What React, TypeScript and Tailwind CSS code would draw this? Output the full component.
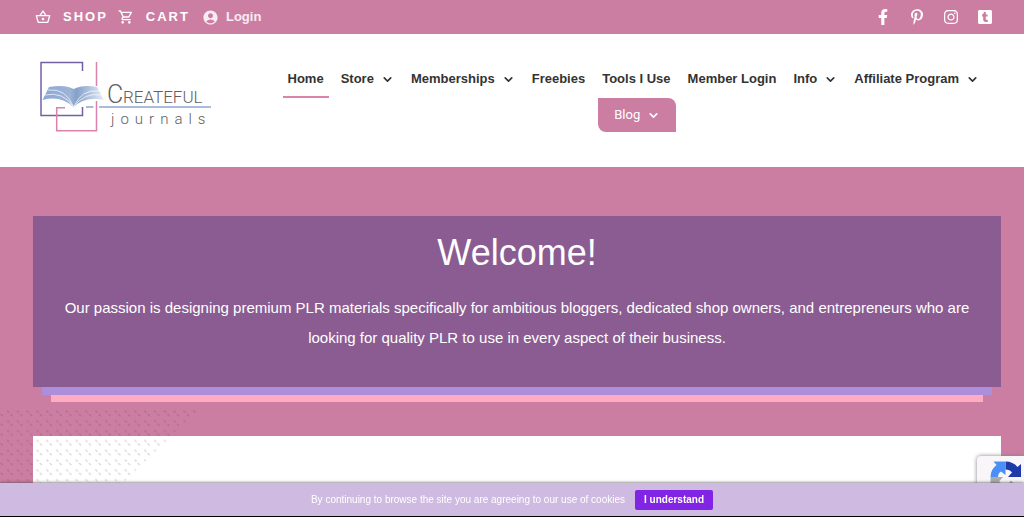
import React from 'react';
import {FaFacebookF, FaPinterestP, FaInstagram, FaTumblrSquare} from "react-icons/fa";
import {MdOutlineShoppingBasket, MdOutlineShoppingCart, MdAccountCircle} from "react-icons/md";
import {ChevronDown} from "lucide-react";

interface INavItem {
	title: string,
	hasMenu?: boolean,
	active?: boolean
}

const navItems: INavItem[] = [
	{title: "Home", active: true},
	{title: "Store", hasMenu: true},
	{title: "Memberships", hasMenu: true},
	{title: "Freebies"},
	{title: "Tools I Use"},
	{title: "Member Login"},
	{title: "Info", hasMenu: true},
	{title: "Affiliate Program", hasMenu: true},
];

const socials = [
	{name: "Facebook", Icon: FaFacebookF},
	{name: "Pinterest", Icon: FaPinterestP},
	{name: "Instagram", Icon: FaInstagram},
	{name: "Tumblr", Icon: FaTumblrSquare},
];

const TopBar = () => (
	<div className="flex h-[34px] items-center justify-between bg-[#cc7ea2] pr-[31px] pl-[35px] text-white">
		<div className="flex items-center text-[13px] font-bold">
			<a href="#shop" className="flex items-center gap-3 tracking-[2px]">
				<MdOutlineShoppingBasket size={16}/>SHOP
			</a>
			<a href="#cart" className="ml-[10px] flex items-center gap-3 tracking-[2px]">
				<MdOutlineShoppingCart size={16}/>CART
			</a>
			<a href="#login" className="ml-3 flex items-center gap-[7px] text-white/85">
				<MdAccountCircle size={17}/>Login
			</a>
		</div>
		<div className="flex items-center gap-[18px]">
			{socials.map(({name, Icon}) => (
				<a key={name} href={`#${name.toLowerCase()}`} aria-label={name}><Icon size={16}/></a>
			))}
		</div>
	</div>
);

const Logo = () => (
	<a href="#home" aria-label="Createful journals" className="block shrink-0">
		<svg width="176" height="76" viewBox="0 0 176 76" fill="none">
			<defs>
				<linearGradient id="page" x1="0" y1="0" x2="1" y2="0">
					<stop offset="0" stopColor="#8ba6d8"/>
					<stop offset="0.45" stopColor="#9fb4d6"/>
					<stop offset="0.55" stopColor="#84a0c8"/>
					<stop offset="1" stopColor="#e4edf6"/>
				</linearGradient>
			</defs>
			<path d="M45.500 11V2.500H4V55.500H45.500V47" stroke="#7560a4" strokeWidth="1.500"/>
			<path d="M59.500 2V26M59.500 41V70.700H19.700V47.700H28" stroke="#da82ab" strokeWidth="1.500"/>
			<path d="M49 47H56.500M62 47H174" stroke="#8fa5d0" strokeWidth="1.500"/>
			<path d="M12 27Q28 24 36.700 29Q46 24 60 27L67 40Q46 36 36.700 47.500Q24 35 5.500 40Z" fill="url(#page)"/>
			<path d="M11 30Q29 28 36.700 47Q44 29 62 31M8 35Q26 31 36.700 47Q47 32 65 35" stroke="#fff" strokeWidth="0.700"/>
			<g fill="#626063" className="font-['Roboto',sans-serif] font-light">
				<text x="70" y="43" fontSize="25">C</text>
				<text x="86" y="43" fontSize="17">REATEFUL</text>
				<text x="74" y="64" fontSize="15" className="tracking-[6px]">journals</text>
			</g>
		</svg>
	</a>
);

const Header = () => (
	<header className="flex h-[133px] justify-between bg-white pr-8 pl-[37px]">
		<div className="pt-[26px]"><Logo/></div>
		<nav className="flex flex-col items-center pt-7">
			<ul className="flex gap-[7px] pr-2 text-[13px] font-bold text-[#333]">
				{navItems.map((item) => (
					<li key={item.title}>
						<a href="#nav"
							 className={`flex h-9 items-center gap-[7px] border-b-2 px-[5px] whitespace-nowrap ${item.active ? "border-[#d884ad]" : "border-transparent"}`}>
							{item.title}
							{item.hasMenu && <ChevronDown size={13} strokeWidth={3}/>}
						</a>
					</li>
				))}
			</ul>
			<a href="#blog"
				 className="flex h-[34px] items-center gap-[7px] rounded-tr-lg rounded-bl-lg bg-[#cc7ea2] px-4 font-['Roboto',sans-serif] text-[13px] text-white">
				Blog
				<ChevronDown size={13} strokeWidth={3}/>
			</a>
		</nav>
	</header>
);

const Welcome = () => (
	<section>
		<div className="bg-[#8a5c92] px-6 pt-[13px] pb-[34px] text-center text-white">
			<h1 className="text-[36px] leading-[48px]">Welcome!</h1>
			<p className="mt-4 text-[15px] leading-[30px]">
				Our passion is designing premium PLR materials specifically for ambitious bloggers, dedicated shop owners, and entrepreneurs who are looking for quality PLR to use in every aspect of their business.
			</p>
		</div>
		<div className="mx-[9px] h-2 bg-[#ad8edb]"/>
		<div className="mx-[18px] h-[7px] bg-[#ffacc2]"/>
	</section>
);

const DotPattern = () => (
	<svg className="absolute top-[410px] left-0" width="200" height="76">
		<defs>
			<pattern id="dots" width="9.800" height="9.800" patternUnits="userSpaceOnUse">
				<path d="M7 0.500h1.300v1h1v1.300h-1.300v-1h-1zM0.600 3.900h1.300v1h1v1.300h-1.300v-1h-1z" fill="#50204c" fillOpacity="0.230"/>
			</pattern>
		</defs>
		<path d="M0 0H198L120 76H0Z" fill="url(#dots)"/>
	</svg>
);

const RecaptchaBadge = () => (
	<div className="fixed right-0 bottom-0 h-[61px] w-[47px] rounded-tl-sm bg-[#f9f6fa] pt-1 pl-3 shadow-[0_0_4px_#808080]">
		<svg width="34" height="34" viewBox="0 0 34 34">
			<path d="M16.500 1.500Q24 1.500 28.500 7L32 4V17H19L23 12.500Q21 9.500 16.500 9.500Z" fill="#1c3aa9"/>
			<path d="M16.500 1.500H4.500L7.500 5Q1.500 9.500 1.500 17H9Q9 13 12 11.500L16.500 15Z" fill="#4a8ff5"/>
			<path d="M1.500 17V31L5 28Q16 37 28 27L22 20.500Q17 28 10 21.500L14 17Z" fill="#ababab"/>
		</svg>
	</div>
);

const CookieBar = () => (
	<div className="fixed inset-x-0 bottom-0 flex h-[34px] items-center justify-center gap-[10px] border-b border-black bg-[#cfbae1] text-[10px] text-white shadow-[0_0_3px_#444]">
		<span>By continuing to browse the site you are agreeing to our use of cookies</span>
		<button className="h-5 rounded-xs bg-[#8224e3] px-[9px] font-bold">I understand</button>
	</div>
);

const App = () => {
	return (
		<div className="relative h-screen overflow-hidden bg-[#cc7ea2] font-['Liberation_Sans',Arial,sans-serif]">
			<TopBar/>
			<Header/>
			<main className="pt-[49px] pr-[23px] pl-[33px]">
				<Welcome/>
				<div className="mt-[34px] h-40 bg-white"/>
			</main>
			<DotPattern/>
			<RecaptchaBadge/>
			<CookieBar/>
		</div>
	);
};

export default App;
